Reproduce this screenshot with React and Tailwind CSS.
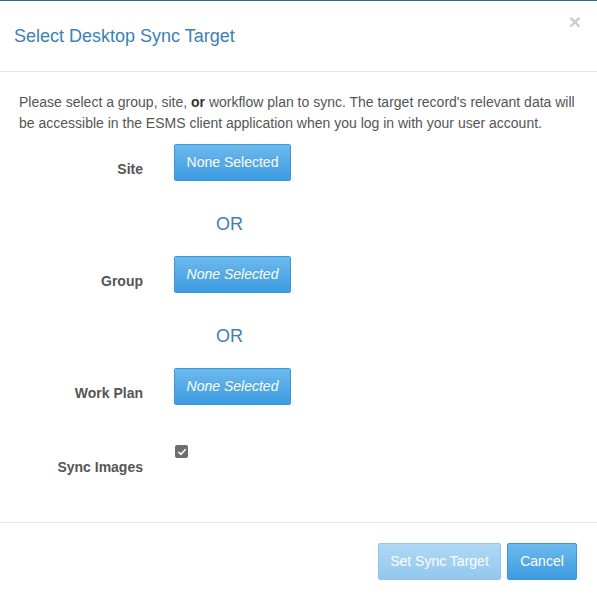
const font = { fontFamily: '"Liberation Sans", Arial, sans-serif' };

const PickButton = ({ italic }) => (
  <button
    className={`h-[37px] w-[117px] rounded-[2px] border border-[#3a97da] bg-gradient-to-b from-[#6cbaee] to-[#3b9be0] text-[14px] text-white [text-shadow:0_-1px_0_rgba(0,0,0,0.1)] ${italic ? "italic" : ""}`}
  >
    None Selected
  </button>
);

const Row = ({ label, children, labelPad = "pt-[15px]" }) => (
  <div className="flex">
    <div className={`w-[124px] shrink-0 text-right text-[14px] font-bold leading-[20px] text-[#555] ${labelPad}`}>
      {label}
    </div>
    <div className="ml-[31px]">{children}</div>
  </div>
);

const Or = () => (
  <div className="flex h-[75px] pl-[152px]">
    <div className="w-[117px] pt-[30px] text-center text-[18px] leading-[26px] text-[#3d7fb5]">OR</div>
  </div>
);

export default function App() {
  return (
    <div style={font} className="flex h-[600px] w-[597px] flex-col border-t border-[#2b6a95] bg-white">
      {/* header */}
      <div className="relative flex h-[71px] items-center border-b border-[#e5e5e5] px-[14px]">
        <h4 className="text-[18px] text-[#3c80b8]">Select Desktop Sync Target</h4>
        <span className="absolute right-[16px] top-[7px] text-[21px] font-bold leading-[28px] text-black opacity-20">×</span>
      </div>

      {/* body */}
      <div className="flex-1 px-[19px] pt-[20px]">
        <p className="text-[14px] leading-[21px] text-[#555]">
          Please select a group, site, <b className="text-[#333]">or</b> workflow plan to sync. The target record's relevant data will be accessible in the ESMS client application when you log in with your user account.
        </p>
        <div className="mt-[10px]">
          <Row label="Site">
            <PickButton />
          </Row>
          <Or />
          <Row label="Group">
            <PickButton italic />
          </Row>
          <Or />
          <Row label="Work Plan">
            <PickButton italic />
          </Row>
          <div className="h-[40px]" />
          <Row label="Sync Images" labelPad="pt-[12px]">
            <div className="ml-[1px] flex h-[13px] w-[13px] items-center justify-center rounded-[2px] bg-[#6e6e6e]">
              <svg viewBox="0 0 12 12" className="h-[10px] w-[10px]">
                <path d="M2.2 6.3 L4.8 8.8 L9.8 3.2" fill="none" stroke="white" strokeWidth="1.9" strokeLinecap="round" strokeLinejoin="round" />
              </svg>
            </div>
          </Row>
        </div>
      </div>

      {/* footer */}
      <div className="flex h-[78px] justify-end gap-[6px] border-t border-[#e5e5e5] px-[20px] pt-[20px]">
        <button className="h-[37px] w-[123px] rounded-[2px] border border-[#3a97da] bg-gradient-to-b from-[#6cbaee] to-[#3b9be0] text-[14px] text-white opacity-55">
          Set Sync Target
        </button>
        <button className="h-[37px] w-[70px] rounded-[2px] border border-[#3a97da] bg-gradient-to-b from-[#6cbaee] to-[#3b9be0] text-[14px] text-white">
          Cancel
        </button>
      </div>
    </div>
  );
}
